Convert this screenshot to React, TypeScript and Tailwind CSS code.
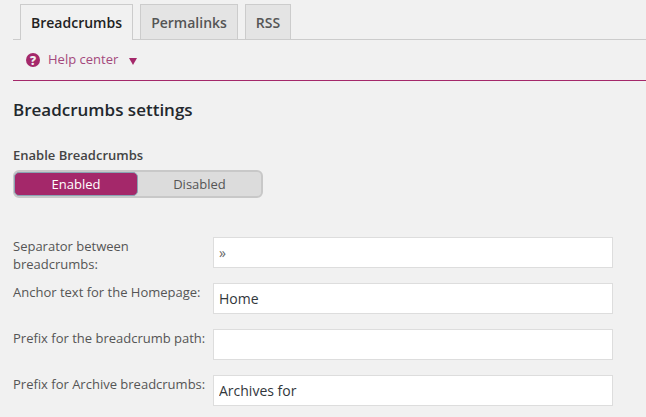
const rows = [
  { label: 'Separator between breadcrumbs:', value: '»', muted: true },
  { label: 'Anchor text for the Homepage:', value: 'Home' },
  { label: 'Prefix for the breadcrumb path:', value: '' },
  { label: 'Prefix for Archive breadcrumbs:', value: 'Archives for' },
];

export default function App() {
  return (
    <div className="w-[646px] h-[417px] overflow-hidden bg-[#f1f1f1] font-['Open_Sans',sans-serif] text-[13px] text-[#444]">
      <div className="ml-[13px] pt-[4px] pl-[7px] h-[40px] flex gap-[7px] border-b border-[#ccc]">
        <div className="h-[36px] w-[113px] flex items-center justify-center bg-[#f1f1f1] border border-b-0 border-[#ccc] text-[14px] font-semibold text-[#222]">
          Breadcrumbs
        </div>
        <div className="h-[35px] w-[98px] flex items-center justify-center bg-[#e4e4e4] border border-b-0 border-[#ccc] text-[14px] font-semibold text-[#555]">
          Permalinks
        </div>
        <div className="h-[35px] w-[46px] flex items-center justify-center bg-[#e4e4e4] border border-b-0 border-[#ccc] text-[14px] font-semibold text-[#555]">
          RSS
        </div>
      </div>
      <div className="ml-[13px] h-[41px] border-b border-[#a4286a] flex items-center pl-[13px] text-[#a4286a]">
        <svg width="14" height="14" viewBox="0 0 14 14">
          <circle cx="7" cy="7" r="7" fill="#a4286a" />
          <text x="7" y="11.5" textAnchor="middle" fontSize="12" fontWeight="800" fill="#f1f1f1">?</text>
        </svg>
        <span className="ml-[8px] text-[#a4487c]">Help center</span>
        <svg className="ml-[11px] mt-[2px]" width="8" height="7" viewBox="0 0 8 7">
          <path d="M0 0H8L4 7Z" fill="#a4286a" />
        </svg>
      </div>
      <div className="pl-[13px]">
        <h2 className="mt-[18px] text-[17px] leading-[22px] font-semibold text-[#23282d]">Breadcrumbs settings</h2>
        <div className="mt-[25px] leading-[18px] font-semibold">Enable Breadcrumbs</div>
        <div className="mt-[6px] w-[250px] h-[28px] flex rounded-[6px] bg-[#dcdcdc] border-2 border-[#c8c8c8]">
          <div className="w-[124px] -ml-px flex items-center justify-center rounded-[5px] bg-[#a4286a] border border-[#8aa4b4] text-white">
            <span className="mt-[1px]">Enabled</span>
          </div>
          <div className="flex-1 flex items-center justify-center text-[#555]">
            <span className="mt-[1px]">Disabled</span>
          </div>
        </div>
        <div className="mt-[39px] flex flex-col gap-[15px]">
          {rows.map((row) => (
            <div key={row.label} className="flex h-[31px]">
              <label className="w-[200px] h-[31px] leading-[18px] text-[#555]">{row.label}</label>
              <input
                readOnly
                value={row.value}
                className={`w-[400px] h-[31px] px-[5px] bg-white border border-[#ddd] outline-none text-[14px] ${row.muted ? 'text-[#666]' : 'text-[#32373c]'}`}
              />
            </div>
          ))}
        </div>
      </div>
    </div>
  );
}
